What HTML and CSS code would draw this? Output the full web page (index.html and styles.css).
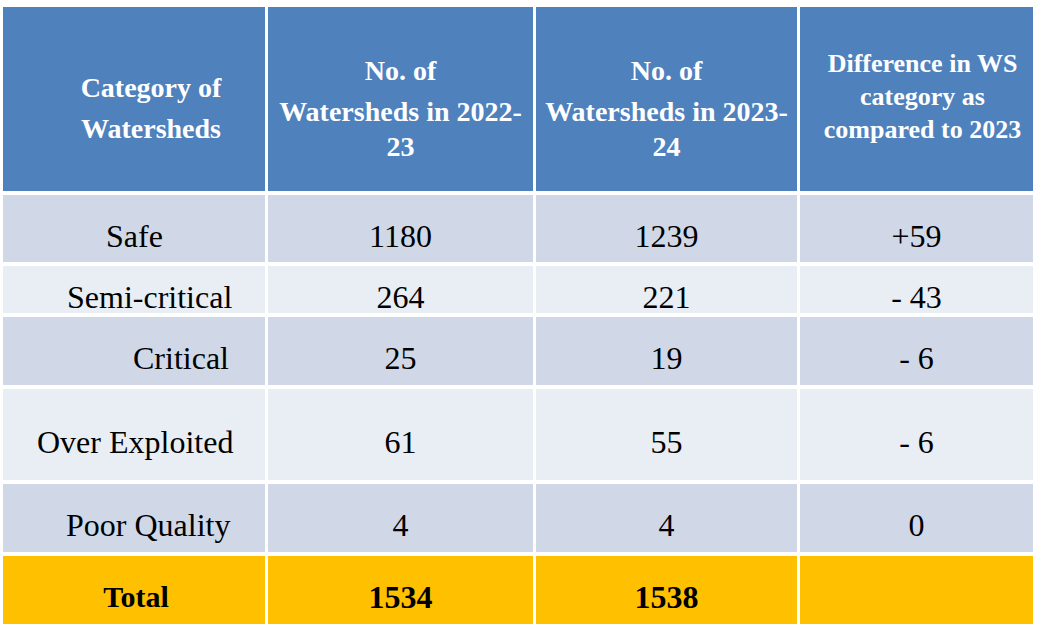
FILE: index.html
```html
<!DOCTYPE html>
<html>
<head>
<meta charset="utf-8">
<title>Table</title>
<link rel="stylesheet" href="styles.css">
</head>
<body class="page">
<table class="ws">
  <colgroup>
    <col class="c1">
    <col class="c2">
    <col class="c3">
    <col class="c4">
  </colgroup>
  <thead>
    <tr class="r-head">
      <th class="head head-cat"><span class="hl hl-cat">Category of</span><span class="hl hl-cat">Watersheds</span></th>
      <th class="head"><span class="hl hl-first">No. of</span><span class="hl">Watersheds in 2022-</span><span class="hl">23</span></th>
      <th class="head"><span class="hl hl-first">No. of</span><span class="hl">Watersheds in 2023-</span><span class="hl">24</span></th>
      <th class="head head-diff"><span class="hl hl-diff">Difference in WS</span><span class="hl hl-diff">category as</span><span class="hl hl-diff">compared to 2023</span></th>
    </tr>
  </thead>
  <tbody>
    <tr class="r-safe dark">
      <td class="cell label lab-safe">Safe</td>
      <td class="cell">1180</td>
      <td class="cell">1239</td>
      <td class="cell">+59</td>
    </tr>
    <tr class="r-semi light">
      <td class="cell label lab-semi">Semi-critical</td>
      <td class="cell">264</td>
      <td class="cell">221</td>
      <td class="cell">- 43</td>
    </tr>
    <tr class="r-crit dark">
      <td class="cell label lab-crit">Critical</td>
      <td class="cell">25</td>
      <td class="cell">19</td>
      <td class="cell">- 6</td>
    </tr>
    <tr class="r-over light">
      <td class="cell label lab-over">Over Exploited</td>
      <td class="cell">61</td>
      <td class="cell">55</td>
      <td class="cell">- 6</td>
    </tr>
    <tr class="r-poor dark">
      <td class="cell label lab-poor">Poor Quality</td>
      <td class="cell">4</td>
      <td class="cell">4</td>
      <td class="cell">0</td>
    </tr>
    <tr class="r-total total">
      <td class="cell total-label">Total</td>
      <td class="cell">1534</td>
      <td class="cell">1538</td>
      <td class="cell">&nbsp;</td>
    </tr>
  </tbody>
</table>
</body>
</html>
```

FILE: styles.css
```css
.page {
  margin: 0;
  padding: 0;
  background: #ffffff;
  color: #000000;
  font-family: "Liberation Serif", serif;
  font-synthesis: none;
}

.ws {
  border-collapse: separate;
  border-spacing: 3px 4px;
  table-layout: fixed;
  width: 1036px;
  margin: 3px 0 0 0;
  font-family: inherit;
}

.c1 { width: 262px; }
.c2 { width: 265px; }
.c3 { width: 261px; }
.c4 { width: 233px; }

.r-head { height: 184px; }
.r-safe { height: 67px; }
.r-semi { height: 47px; }
.r-crit { height: 68px; }
.r-over { height: 91px; }
.r-poor { height: 68px; }
.r-total { height: 68px; }

.head {
  background: #4f81bd;
  color: #ffffff;
  font-weight: bold;
  font-size: 28px;
  font-family: inherit;
  text-align: center;
  vertical-align: middle;
  padding: 18px 0 0 0;
}

.hl {
  display: block;
  line-height: 35px;
  white-space: nowrap;
}

.hl-first {
  margin-bottom: 6px;
}

.head-cat {
  padding-left: 34px;
}

.hl-cat {
  line-height: 41px;
}

.head-diff {
  font-size: 26px;
  padding: 0 0 6px 12px;
}

.hl-diff {
  line-height: 33px;
}

.cell {
  font-size: 32px;
  line-height: 30px;
  font-family: inherit;
  text-align: center;
  vertical-align: middle;
  padding: 14px 0 0 0;
  white-space: nowrap;
}

.dark .cell {
  background: #d0d8e8;
}

.light .cell {
  background: #e9edf4;
}

.total .cell {
  background: #ffc000;
  font-weight: bold;
}

.total-label {
  font-size: 30px;
  padding-left: 4px;
}

.label {
  text-align: left;
}

.lab-safe { padding-left: 103px; }
.lab-semi { padding-left: 64px; }
.lab-crit { padding-left: 130px; }
.lab-over { padding-left: 34px; }
.lab-poor { padding-left: 63px; }
```
